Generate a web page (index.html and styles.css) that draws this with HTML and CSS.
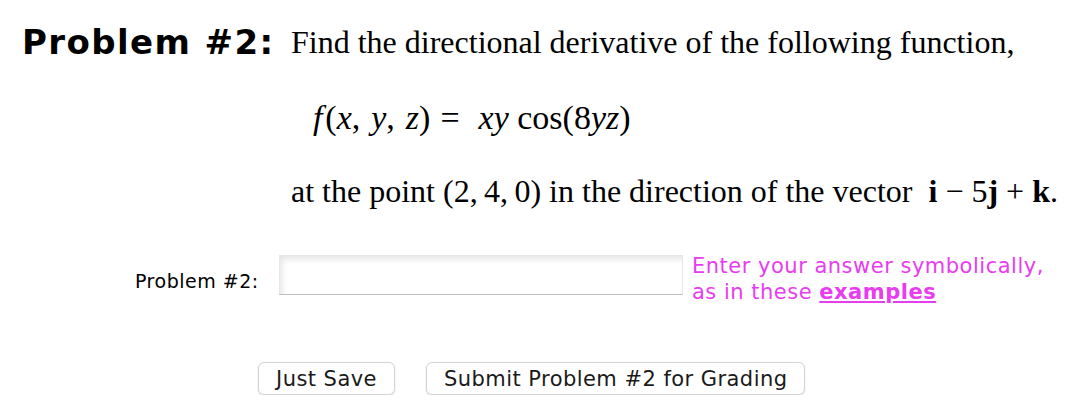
FILE: index.html
```html
<!DOCTYPE html>
<html lang="en">
<head>
<link rel="stylesheet" href="styles.css">
<meta charset="utf-8">
<title>Problem #2</title>
</head>
<body>
<div class="page">
  <div class="statement">
    <h2 class="num">Problem #2:</h2>
    <div class="text">
      <p class="line">Find the directional derivative of the following function,</p>
      <p class="eq"><i>f</i>&#8202;(<i>x</i><span class="c">,</span><i>y</i><span class="c">,</span><i>z</i>)<span class="rel">=</span><i>xy</i> cos(8<i>yz</i>)</p>
      <p class="line">at the point (2,&#8201;4,&#8201;0) in the direction of the vector&nbsp; <b>i</b> &minus; 5<b>j</b> + <b>k</b>.</p>
    </div>
  </div>

  <div class="answer">
    <label class="lbl" for="ans">Problem #2:</label>
    <input type="text" id="ans" class="box">
    <div class="hint">Enter your answer symbolically,<br>as in these <a href="#">examples</a></div>
  </div>

  <div class="actions">
    <button class="btn">Just Save</button>
    <button class="btn">Submit Problem #2 for Grading</button>
  </div>
</div>
</body>
</html>
```

FILE: styles.css
```css
body {
  margin: 0;
  padding: 0;
  background: #fff;
  color: #000;
}

.page {
  padding: 20px 0 0 22px;
}

.statement {
  display: flex;
  align-items: flex-start;
}

.num {
  margin: 0;
  font-family: "DejaVu Sans", Verdana, sans-serif;
  font-weight: bold;
  font-size: 34px;
  letter-spacing: 1.4px;
  line-height: 44px;
  width: 269px;
  flex: none;
}

.text {
  font-family: "Liberation Serif", "Times New Roman", serif;
  font-size: 32px;
}

.line {
  margin: 0;
  line-height: 44px;
}

.eq {
  margin: 32px 0 29px 22px;
  line-height: 44px;
  font-size: 34px;
}

.c {
  margin-right: 11px;
}

.rel {
  margin: 0 19px 0 10px;
}

.answer {
  display: flex;
  align-items: flex-start;
  margin-top: 42px;
}

.lbl {
  font-family: "DejaVu Sans", Verdana, sans-serif;
  font-size: 19px;
  line-height: 23px;
  letter-spacing: 0.5px;
  width: 144px;
  margin: 15px 0 0 113px;
}

.box {
  width: 402px;
  height: 38px;
  margin: 0;
  padding: 0;
  border: 1px solid #e6e6e6;
  border-bottom-color: #bdbdbd;
  box-shadow: inset 6px 7px 6px -4px #e4e4e4;
  background: #fff;
}

.hint {
  margin: -2px 0 0 9px;
  font-family: "DejaVu Sans", Verdana, sans-serif;
  font-size: 21px;
  letter-spacing: 0.5px;
  line-height: 26px;
  color: #e83cf0;
}

.hint a {
  color: #e83cf0;
  font-weight: bold;
}

.actions {
  display: flex;
  gap: 31px;
  margin: 57px 0 0 236px;
}

.btn {
  font-family: "DejaVu Sans", Verdana, sans-serif;
  font-size: 21px;
  letter-spacing: 0.45px;
  color: #1a1a1a;
  background: #fff;
  border: 1px solid #d4d4d4;
  border-radius: 6px;
  box-shadow: 0 1px 2px rgba(0,0,0,0.12);
  height: 33px;
  padding: 0 17px;
}
```
